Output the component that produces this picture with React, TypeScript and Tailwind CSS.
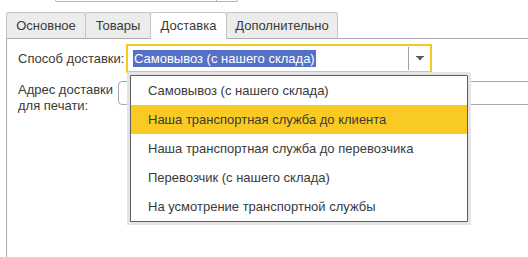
import React from 'react';

const options = [
  'Самовывоз (с нашего склада)',
  'Наша транспортная служба до клиента',
  'Наша транспортная служба до перевозчика',
  'Перевозчик (с нашего склада)',
  'На усмотрение транспортной службы',
];

const tabs = [
  { title: 'Основное', w: 'w-[80px]' },
  { title: 'Товары', w: 'w-[66px]' },
  { title: 'Доставка', w: 'w-[77px]', active: true },
  { title: 'Дополнительно', w: 'w-[112px]' },
];

export default function App() {
  return (
    <div className="relative w-[528px] h-[257px] overflow-hidden bg-white text-[13px] text-[#3a3a3a] font-['Liberation_Sans',Arial,sans-serif]">
      {/* край поля сверху */}
      <div className="ml-[55px] w-[183px] h-[2px] flex border-x border-b border-[#b4b4b4] rounded-b-[3px]">
        <div className="w-[161px] border-r border-[#b4b4b4]" />
      </div>

      {/* вкладки */}
      <div className="mt-[10px] flex pl-[6px]">
        {tabs.map((t) => (
          <div
            key={t.title}
            className={
              t.active
                ? `${t.w} h-[27px] flex items-center justify-center bg-white border-x border-t border-[#c4c4c4] rounded-t-[3px] -ml-px first:ml-0`
                : `${t.w} h-[27px] flex items-center justify-center bg-[#ececec] border border-[#c4c4c4] border-b-[#acacac] rounded-t-[3px] -ml-px first:ml-0`
            }
          >
            {t.title}
          </div>
        ))}
        <div className="flex-1 border-b border-[#acacac]" />
      </div>

      {/* панель */}
      <div className="ml-[6px] h-[220px] border-l border-[#acacac] pl-[10px] pt-[5px]">
        <div className="flex items-center h-[29px]">
          <span className="w-[109px] pl-px">Способ доставки:</span>
          <div className="w-[306px] h-[29px] flex items-center border-2 border-[#f8c81f] pl-[5px]">
            <span className="flex-1">
              <span className="bg-[#5571c6] text-white px-px py-px">Самовывоз (с нашего склада)</span>
            </span>
            <div className="w-px h-[23px] bg-[#a0a0a0]" />
            <div className="w-[21px] flex justify-center">
              <svg width="8" height="5" viewBox="0 0 8 5">
                <path d="M0 0h8v1H7L4 4.5 1 1H0z" fill="#555" />
              </svg>
            </div>
          </div>
        </div>

        <div className="flex mt-[8px]">
          <div className="w-[101px] pl-px leading-[16px] pt-[1px]">
            Адрес доставки
            <br />
            для печати:
          </div>
          <div className="flex-1 h-[24px] border border-[#a8a8a8] rounded-l-[4px] -mr-[4px]" />
        </div>
      </div>

      {/* выпадающий список */}
      <div className="absolute left-[130px] top-[75px] w-[338px] bg-white border border-[#5e5e5e] shadow-[0_0_0_3px_#e4e4e4] rounded-tr-[1px]">
        {options.map((o, i) => (
          <div
            key={o}
            className={`h-[29px] flex items-center pl-[17px] ${i === 1 ? 'bg-[#f9cb22]' : ''}`}
          >
            {o}
          </div>
        ))}
      </div>
    </div>
  );
}
